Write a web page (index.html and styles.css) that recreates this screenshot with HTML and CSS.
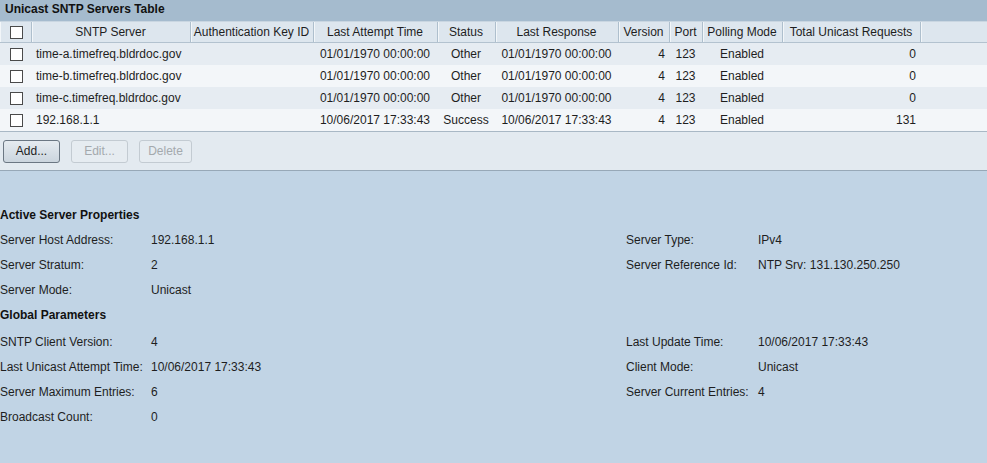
FILE: index.html
```html
<!DOCTYPE html>
<html>
<head>
<meta charset="utf-8">
<link rel="stylesheet" href="styles.css">
</head>
<body>
<div class="page">
  <div class="title-bar">Unicast SNTP Servers Table</div>
  <div class="table-wrap">
    <table class="servers">
      <colgroup>
        <col class="c-chk"><col class="c-srv"><col class="c-auth"><col class="c-att"><col class="c-stat"><col class="c-resp"><col class="c-ver"><col class="c-port"><col class="c-poll"><col class="c-tot"><col>
      </colgroup>
      <thead>
        <tr>
          <th><span class="chk"></span></th>
          <th>SNTP Server</th>
          <th>Authentication Key ID</th>
          <th>Last Attempt Time</th>
          <th>Status</th>
          <th>Last Response</th>
          <th>Version</th>
          <th>Port</th>
          <th>Polling Mode</th>
          <th>Total Unicast Requests</th>
          <th class="filler"></th>
        </tr>
      </thead>
      <tbody>
        <tr class="odd">
          <td class="center"><span class="chk"></span></td>
          <td class="left">time-a.timefreq.bldrdoc.gov</td>
          <td></td>
          <td class="center">01/01/1970 00:00:00</td>
          <td class="center">Other</td>
          <td class="center">01/01/1970 00:00:00</td>
          <td class="right">4</td>
          <td class="center">123</td>
          <td class="center">Enabled</td>
          <td class="right">0</td>
          <td></td>
        </tr>
        <tr class="even">
          <td class="center"><span class="chk"></span></td>
          <td class="left">time-b.timefreq.bldrdoc.gov</td>
          <td></td>
          <td class="center">01/01/1970 00:00:00</td>
          <td class="center">Other</td>
          <td class="center">01/01/1970 00:00:00</td>
          <td class="right">4</td>
          <td class="center">123</td>
          <td class="center">Enabled</td>
          <td class="right">0</td>
          <td></td>
        </tr>
        <tr class="odd">
          <td class="center"><span class="chk"></span></td>
          <td class="left">time-c.timefreq.bldrdoc.gov</td>
          <td></td>
          <td class="center">01/01/1970 00:00:00</td>
          <td class="center">Other</td>
          <td class="center">01/01/1970 00:00:00</td>
          <td class="right">4</td>
          <td class="center">123</td>
          <td class="center">Enabled</td>
          <td class="right">0</td>
          <td></td>
        </tr>
        <tr class="even">
          <td class="center"><span class="chk"></span></td>
          <td class="left">192.168.1.1</td>
          <td></td>
          <td class="center">10/06/2017 17:33:43</td>
          <td class="center">Success</td>
          <td class="center">10/06/2017 17:33:43</td>
          <td class="right">4</td>
          <td class="center">123</td>
          <td class="center">Enabled</td>
          <td class="right">131</td>
          <td></td>
        </tr>
      </tbody>
    </table>
  </div>
  <div class="button-bar">
    <button class="btn">Add...</button>
    <button class="btn disabled">Edit...</button>
    <button class="btn disabled">Delete</button>
  </div>
  <div class="props">
    <div class="heading">Active Server Properties</div>
    <div class="lbl">Server Host Address:</div><div class="val">192.168.1.1</div>
    <div class="lbl">Server Type:</div><div class="val">IPv4</div>
    <div class="lbl">Server Stratum:</div><div class="val">2</div>
    <div class="lbl">Server Reference Id:</div><div class="val">NTP Srv: 131.130.250.250</div>
    <div class="lbl">Server Mode:</div><div class="val">Unicast</div>
    <div></div><div></div>
    <div class="heading gap">Global Parameters</div>
    <div class="lbl">SNTP Client Version:</div><div class="val">4</div>
    <div class="lbl">Last Update Time:</div><div class="val">10/06/2017 17:33:43</div>
    <div class="lbl">Last Unicast Attempt Time:</div><div class="val">10/06/2017 17:33:43</div>
    <div class="lbl">Client Mode:</div><div class="val">Unicast</div>
    <div class="lbl">Server Maximum Entries:</div><div class="val">6</div>
    <div class="lbl">Server Current Entries:</div><div class="val">4</div>
    <div class="lbl">Broadcast Count:</div><div class="val">0</div>
    <div></div><div></div>
  </div>
</div>
</body>
</html>
```

FILE: styles.css
```css
html, body {
  margin: 0;
  padding: 0;
}
body {
  font-family: "Liberation Sans", Arial, sans-serif;
  font-size: 12px;
  color: #1e1e1e;
  background: #c1d4e5;
  width: 987px;
  height: 463px;
  overflow: hidden;
}
.page {
  display: flex;
  flex-direction: column;
}
.title-bar {
  height: 21px;
  line-height: 18px;
  background: #a5bbce;
  font-weight: bold;
  padding-left: 5px;
  color: #111;
}
.table-wrap {
  background: #dde6ee;
  border-top: 1px solid #c9d6e1;
}
.servers {
  border-collapse: collapse;
  table-layout: fixed;
  width: 100%;
}
.c-chk { width: 31px; }
.c-srv { width: 159px; }
.c-auth { width: 123px; }
.c-att { width: 124px; }
.c-stat { width: 58px; }
.c-resp { width: 123px; }
.c-ver { width: 51px; }
.c-port { width: 33px; }
.c-poll { width: 80px; }
.c-tot { width: 138px; }

.servers th {
  height: 20px;
  padding: 0 2px;
  font-weight: normal;
  text-align: center;
  white-space: nowrap;
  background: #dde6ee;
  border-right: 1px solid #aebfcd;
  box-shadow: inset 1px 0 0 #f2f6f9;
  border-bottom: 1px solid #b3c2cf;
}
.servers th.filler {
  border-right: none;
}
.servers td {
  height: 22px;
  padding: 0 4px;
  white-space: nowrap;
}
.servers tr.odd td { background: #e6ecf2; }
.servers tr.even td { background: #f3f6f9; }
.servers td.left { text-align: left; padding-left: 5px; }
.servers td.center { text-align: center; }
.servers td.right { text-align: right; }
.chk {
  display: inline-block;
  width: 11px;
  height: 11px;
  border: 1px solid #4a4a4a;
  background: #fff;
  vertical-align: middle;
}
.servers td:first-child,
.servers th:first-child { text-align: left; padding-left: 10px; }

.button-bar {
  height: 38px;
  background: #e3eaf0;
  border-top: 1px solid #a9b8c5;
  border-bottom: 1px solid #97a8b7;
  display: flex;
  align-items: center;
  gap: 11px;
  padding-left: 3px;
}
.btn {
  font-family: "Liberation Sans", Arial, sans-serif;
  font-size: 12px;
  height: 23px;
  padding: 0;
  border-radius: 3px;
  color: #1e1e1e;
  border: 1px solid #6b7783;
  background: linear-gradient(#e5ebf0, #cbd5de);
  width: 57px;
}
.btn.disabled {
  color: #a4a9ad;
  border-color: #c3cbd2;
  background: #e6ecf1;
}
.btn.disabled:last-child { width: 53px; }

.props {
  display: grid;
  grid-template-columns: 151px 475px 132px 1fr;
  grid-auto-rows: minmax(25px, auto);
  align-items: center;
  padding-top: 31px;
}
.props .heading {
  grid-column: 1 / span 4;
  font-weight: bold;
  color: #111;
}
.props .heading.gap {
  height: 27px;
  line-height: 27px;
}
.props .lbl, .props .val { white-space: nowrap; }
.props > div:empty { height: 0; }
```
